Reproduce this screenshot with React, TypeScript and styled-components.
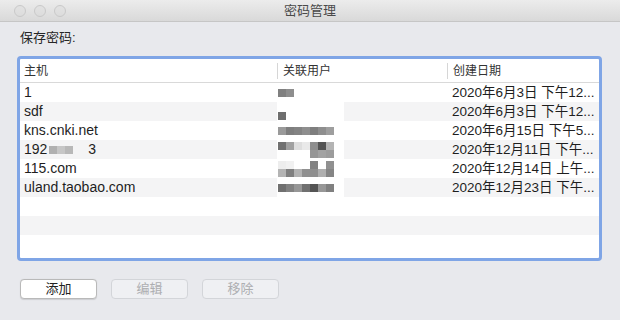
import React from 'react';
import styled, { createGlobalStyle } from 'styled-components';

const GlobalStyle = createGlobalStyle`
  html, body {
    margin: 0;
    padding: 0;
    background: #e8e9ed;
  }
  body {
    font-family: "Liberation Sans", "Noto Sans CJK SC", sans-serif;
    font-size: 13px;
    color: #222;
  }
`;

const Window = styled.div`
  width: 620px;
  height: 320px;
  background: #e8e9ed;
  display: flex;
  flex-direction: column;
  overflow: hidden;
`;

const TitleBar = styled.div`
  height: 21px;
  border-bottom: 1px solid #c6c6c6;
  background: linear-gradient(180deg, #ececec 0%, #d9d9d9 100%);
  display: grid;
  grid-template-columns: 1fr auto 1fr;
  align-items: center;
  padding: 0 14px;
`;

const Lights = styled.div`
  display: flex;
  gap: 8px;
`;

const Light = styled.span`
  width: 10px;
  height: 10px;
  border-radius: 50%;
  border: 1px solid #c9c9c9;
  background: linear-gradient(180deg, #e2e2e2, #dcdcdc);
`;

const Title = styled.div`
  font-size: 13px;
  color: #4a4a4a;
  line-height: 21px;
`;

const Content = styled.div`
  display: flex;
  flex-direction: column;
  padding: 8px 18px 0 17px;
`;

const Label = styled.div`
  height: 16px;
  line-height: 16px;
  padding-left: 3px;
  color: #262626;
`;

const Frame = styled.div`
  margin-top: 10px;
  height: 199px;
  border: 3px solid #7fa5e6;
  border-radius: 4px;
  background: #fff;
  display: flex;
  flex-direction: column;
  overflow: hidden;
`;

const COLS = '257px 170px 152px';

const HeaderRow = styled.div`
  display: grid;
  grid-template-columns: ${COLS};
  height: 23px;
  border-bottom: 1px solid #d9d9d9;
  align-items: center;
`;

const HeaderCell = styled.div<{ $first?: boolean }>`
  height: 16px;
  line-height: 16px;
  font-size: 12px;
  color: #333;
  padding-left: ${(p) => (p.$first ? '4px' : '5px')};
  border-left: ${(p) => (p.$first ? 'none' : '1px solid #d6d6d6')};
`;

const Row = styled.div<{ $alt: boolean }>`
  display: grid;
  grid-template-columns: ${COLS};
  height: 19px;
  line-height: 19px;
  background: ${(p) => (p.$alt ? '#f4f4f5' : '#fff')};
`;

const Cell = styled.div<{ $pad: number; $size?: number }>`
  padding-left: ${(p) => p.$pad}px;
  white-space: nowrap;
  overflow: hidden;
  display: flex;
  align-items: center;
  font-size: ${(p) => p.$size ?? 13.5}px;
  color: #1e1e1e;
`;

const Patch = styled.div<{ $white: boolean }>`
  width: 66px;
  height: 19px;
  margin-left: -6px;
  padding-left: 6px;
  background: ${(p) => (p.$white ? '#fff' : 'transparent')};
  display: flex;
  align-items: center;
`;

const MosaicGrid = styled.div<{ $cols: number }>`
  display: grid;
  grid-template-columns: repeat(${(p) => p.$cols}, 8px);
  grid-auto-rows: 8px;
`;

const Block = styled.span<{ $c: string }>`
  background: ${(p) => p.$c || 'transparent'};
`;

const HostMosaic = styled(MosaicGrid)`
  margin: 0 15px 0 2px;
`;

const ButtonRow = styled.div`
  display: flex;
  gap: 14px;
  margin-top: 18px;
  padding-left: 3px;
`;

const Button = styled.button<{ $disabled?: boolean }>`
  width: 77px;
  height: 20px;
  padding: 0;
  border-radius: 4px;
  font-family: inherit;
  font-size: 13px;
  line-height: 18px;
  border: 1px solid ${(p) => (p.$disabled ? '#d3d5d9' : '#b9b9b9')};
  background: ${(p) => (p.$disabled ? '#eff0f3' : '#fff')};
  color: ${(p) => (p.$disabled ? '#adaeb1' : '#222')};
  box-shadow: ${(p) => (p.$disabled ? 'none' : '0 0.5px 1px rgba(0,0,0,0.12)')};
`;

type Entry = {
  host: string;
  mosaic: string[][];
  date: string;
};

const entries: Entry[] = [
  { host: '1', mosaic: [['#808080', '#8e8e8e']], date: '2020年6月3日 下午12...' },
  { host: 'sdf', mosaic: [[''], ['#6e6e6e']], date: '2020年6月3日 下午12...' },
  {
    host: 'kns.cnki.net',
    mosaic: [['#9a9a9a', '#7e7e7e', '#838383', '#8e8e8e', '#7e7e7e', '#8e8e8e', '#9e9e9e']],
    date: '2020年6月15日 下午5...',
  },
  {
    host: '192',
    mosaic: [
      ['#707070', '#a0a0a0', '#dedede', '#e9e9e9', '#8e8e8e', '#545454', '#b4b4b4'],
      ['', '', '', '', '#969696', '#a2a2a2', '#9c9c9c'],
    ],
    date: '2020年12月11日 下午...',
  },
  {
    host: '115.com',
    mosaic: [
      ['#ededed', '#f1f1f1', '', '', '#828282', '', '#909090'],
      ['#b4b4b4', '#808080', '#b3b3b3', '#909090', '#8f8f8f', '#afafaf', '#858585'],
    ],
    date: '2020年12月14日 上午...',
  },
  {
    host: 'uland.taobao.com',
    mosaic: [['#707070', '#828282', '#979797', '#707070', '#545454', '#979797', '#808080']],
    date: '2020年12月23日 下午...',
  },
];

function Mosaic({ rows }: { rows: string[][] }) {
  const cols = Math.max(...rows.map((r) => r.length));
  return (
    <MosaicGrid $cols={cols}>
      {rows.flatMap((r, i) => r.map((c, j) => <Block key={`${i}-${j}`} $c={c} />))}
    </MosaicGrid>
  );
}

export default function App() {
  const empty = 3;
  return (
    <>
      <GlobalStyle />
      <Window>
        <TitleBar>
          <Lights>
            <Light />
            <Light />
            <Light />
          </Lights>
          <Title>密码管理</Title>
          <span />
        </TitleBar>
        <Content>
          <Label>保存密码:</Label>
          <Frame>
            <HeaderRow>
              <HeaderCell $first>主机</HeaderCell>
              <HeaderCell>关联用户</HeaderCell>
              <HeaderCell>创建日期</HeaderCell>
            </HeaderRow>
            {entries.map((e, i) => (
              <Row key={i} $alt={i % 2 === 1}>
                <Cell $pad={4} $size={14}>
                  {e.host === '192' ? (
                    <>
                      192
                      <HostMosaic $cols={3}>
                        <Block $c="#b0b0b0" />
                        <Block $c="#c6c6c6" />
                        <Block $c="#b8b8b8" />
                      </HostMosaic>
                      3
                    </>
                  ) : (
                    e.host
                  )}
                </Cell>
                <Cell $pad={1}>
                  <Patch $white={i % 2 === 1}>
                    <Mosaic rows={e.mosaic} />
                  </Patch>
                </Cell>
                <Cell $pad={5}>{e.date}</Cell>
              </Row>
            ))}
            {Array.from({ length: empty }).map((_, i) => (
              <Row key={`e${i}`} $alt={(entries.length + i) % 2 === 1} />
            ))}
          </Frame>
          <ButtonRow>
            <Button>添加</Button>
            <Button $disabled>编辑</Button>
            <Button $disabled>移除</Button>
          </ButtonRow>
        </Content>
      </Window>
    </>
  );
}
